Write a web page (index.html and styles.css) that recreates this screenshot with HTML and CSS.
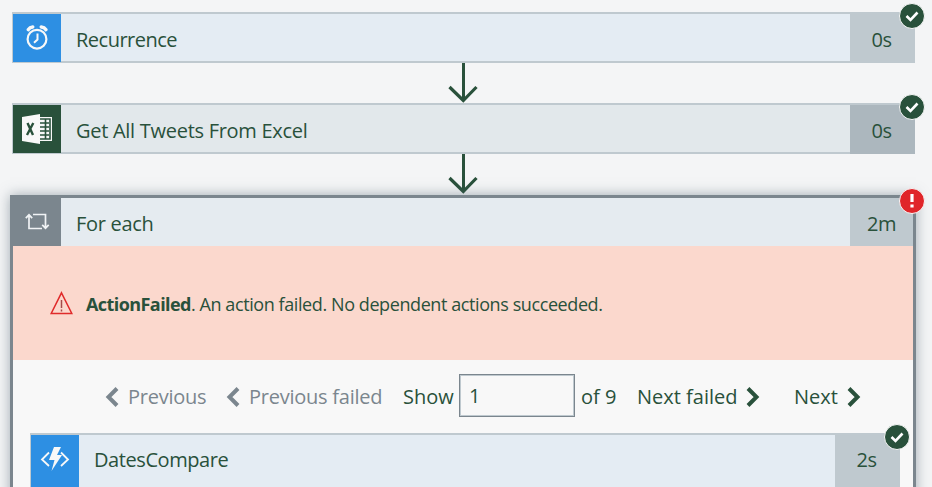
FILE: index.html
```html
<!DOCTYPE html>
<html lang="en">
<head>
<meta charset="utf-8">
<title>Run history</title>
<link rel="stylesheet" href="styles.css">
</head>
<body>
<main class="flow">
  <section class="card">
    <div class="icon blue"><svg width="24" height="28" viewBox="0 0 24 28" fill="none" stroke="#f8f8f8"><circle cx="12" cy="15.2" r="9.4" stroke-width="2.2"/><path d="M12.500 9.500v6L9 18.800" stroke-width="2"/><path d="M3.200 5.700Q4.800 3.300 7.800 3M16.200 3q3.200.3 4.800 2.700" stroke-width="3.400" stroke-linecap="round"/></svg></div>
    <div class="title"><span class="t-recurrence">Recurrence</span></div>
    <div class="time">0s</div>
    <div class="badge"><svg width="24" height="24" viewBox="0 0 24 24"><path d="m6.500 12 4 4 7-7.500"/></svg></div>
  </section>
  <div class="arrow"><svg width="32" height="40" viewBox="0 0 32 40"><path d="M16.500 0v37" stroke-width="3"/><path d="m2.500 24 13.800 13.500L29.500 24"/></svg></div>
  <section class="card excel-card">
    <div class="icon green"><svg width="32" height="32" viewBox="0 0 32 32"><path fill="#f8f8f8" d="M1 4 19 1v3h12v24H19v3L1 28z"/><path fill="none" stroke="#29513b" stroke-width="1.600" d="M19 6h10v20H19M19 10h9M19 14h9M19 18h9M19 22h9M24.500 6v20"/><path fill="none" stroke="#29513b" stroke-width="2.400" d="m6.500 10 5.500 12M12.300 10 6 22"/></svg></div>
    <div class="title"><span class="t-excel">Get All Tweets From Excel</span></div>
    <div class="time">0s</div>
    <div class="badge"><svg width="24" height="24" viewBox="0 0 24 24"><path d="m6.500 12 4 4 7-7.500"/></svg></div>
  </section>
  <div class="arrow"><svg width="32" height="40" viewBox="0 0 32 40"><path d="M16.500 0v37" stroke-width="3"/><path d="m2.500 24 13.800 13.500L29.500 24"/></svg></div>
  <section class="loop">
    <header class="loop-head">
      <div class="icon gray"><svg width="26" height="22" viewBox="0 0 26 22" fill="none" stroke="#f0f3f5" stroke-width="1.700"><path d="M5 5v12.500h13M9 3.500h12.500V17M1.800 7.200 5 3.800l3.200 3.400M18.200 13.800l3.300 3.400 3.200-3.400"/></svg></div>
      <div class="title"><span class="t-foreach">For each</span></div>
      <div class="time">2m</div>
    </header>
    <div class="badge failed"><svg width="24" height="24" viewBox="0 0 24 24"><path d="M12 5v8M12 15.500v3" stroke-width="3.200"/></svg></div>
    <div class="error">
      <svg width="24" height="24" viewBox="0 0 24 24" fill="none" stroke="#e02b2b" stroke-width="1.500"><path d="M12.500 1.800 22.800 22.500H2.200z"/><path d="M12.500 9v8M12.500 18.500v2" stroke="#a44c4b"/></svg>
      <p><b>ActionFailed</b><span>. An action failed. No dependent actions succeeded.</span></p>
    </div>
    <nav class="pager">
      <a class="prev muted"><svg width="14" height="20" viewBox="0 0 14 20"><path d="M12 1.500 3.500 10l8.500 8.500"/></svg><span>Previous</span></a>
      <a class="prev-failed muted"><svg width="14" height="20" viewBox="0 0 14 20"><path d="M12 1.500 3.500 10l8.500 8.500"/></svg><span>Previous failed</span></a>
      <label class="show">Show</label>
      <div class="page-input">1</div>
      <span class="count">of 9</span>
      <a class="next-failed"><span>Next failed</span><svg width="14" height="20" viewBox="0 0 14 20"><path d="M2 1.500 10.500 10 2 18.500"/></svg></a>
      <a class="next"><span>Next</span><svg width="14" height="20" viewBox="0 0 14 20"><path d="M2 1.500 10.500 10 2 18.500"/></svg></a>
    </nav>
    <section class="card inner">
      <div class="icon blue"><svg width="30" height="26" viewBox="0 0 30 26"><path d="M9 6.500 2 13.500l7 6.500M21 6.500l7 7-7 6.500" fill="none" stroke="#f8f8f8" stroke-width="1.800"/><path fill="#f8f8f8" d="M14 1h7l-4 8h5L11.500 25l3-11H9z"/></svg></div>
      <div class="title"><span class="t-dates">DatesCompare</span></div>
      <div class="time">2s</div>
      <div class="badge"><svg width="24" height="24" viewBox="0 0 24 24"><path d="m6.500 12 4 4 7-7.500"/></svg></div>
    </section>
  </section>
</main>
</body>
</html>
```
FILE: styles.css
```css
* { box-sizing: border-box; }
body {
  margin: 0;
  background: #f4f5f6;
  color: #29513b;
  font: 20px/28px "Open Sans", "Noto Sans", sans-serif;
}
.flow { height: 487px; overflow: hidden; padding: 12px 16px 0 10px; }
.card {
  position: relative;
  display: flex;
  height: 51px;
  margin: 0 1px 0 2px;
  border: solid #bfc9cf;
  border-width: 2px 0 2px 1px;
  background: #e4ecf3;
}
.excel-card { background: #e2e8eb; }
.icon {
  display: flex;
  flex: 0 0 48px;
  height: 48px;
  align-items: center;
  justify-content: center;
}
.icon svg { display: block; }
.blue { background: #2d8fe3; }
.green { background: #29513b; }
.gray { background: #7b868e; }
.title {
  display: flex;
  flex: 1;
  align-items: center;
  height: 52px;
  padding-left: 15px;
  white-space: nowrap;
}
.t-recurrence { letter-spacing: -.5px; }
.t-excel { letter-spacing: -.28px; }
.t-foreach { letter-spacing: -.3px; }
.t-dates { letter-spacing: -.42px; }
.time {
  display: flex;
  flex: 0 0 65px;
  align-items: center;
  justify-content: center;
  height: 49px;
  padding: 3px 2px 0 0;
  background: #bfc9cf;
  letter-spacing: -.6px;
}
.excel-card .time { background: #acb7be; }
.badge {
  position: absolute;
  top: -11.5px;
  right: -9.5px;
  width: 26px;
  height: 26px;
  border: 1px solid #f8f8f8;
  border-radius: 50%;
  background: #29513b;
}
.badge svg { display: block; fill: none; stroke: #fff; stroke-width: 2.6; }
.arrow { height: 40px; padding-left: 437px; }
.arrow svg { display: block; fill: none; stroke: #29513b; stroke-width: 3.2; }
.loop {
  position: relative;
  height: 320px;
  margin-top: 1px;
  border: 3px solid #7b868e;
  background: #f8f8f8;
  box-shadow: 0 0 12px rgba(75, 95, 110, .5);
}
.loop-head { display: flex; height: 48px; background: #e5ebf0; }
.loop-head .time { flex-basis: 63px; height: 48px; padding: 4px 0 0; }
.badge.failed { top: -10.5px; right: -11.5px; background: #e02529; }
.error {
  display: flex;
  align-items: center;
  height: 114px;
  padding-left: 36px;
  background: #fbd8cd;
}
.error p { margin: 1px 0 0 13px; font-size: 18px; letter-spacing: -.41px; white-space: nowrap; }
.error b { letter-spacing: -.57px; }
.pager { display: flex; align-items: center; height: 73px; padding-left: 92px; white-space: nowrap; }
.pager a { display: flex; align-items: center; }
.pager svg { fill: none; stroke: #29513b; stroke-width: 4; }
.muted { color: #7b868e; letter-spacing: -.24px; }
.pager .muted svg { stroke: #7b868e; margin-right: 9px; }
.prev { width: 121px; }
.prev-failed { width: 177px; }
.show { width: 56px; }
.page-input {
  width: 116px;
  height: 43px;
  margin-top: -3px;
  padding: 7px 0 0 9px;
  border: 1px solid #7b868e;
  box-shadow: inset 0 0 0 1px #bfc9cf;
}
.count { width: 62px; padding-left: 6px; }
.next-failed { width: 157px; justify-content: space-between; padding-right: 34px; }
.next { width: 67px; justify-content: space-between; }
.inner { margin: 0 13px 0 17px; height: 60px; }
.inner .title { height: 50px; }
.inner .icon, .inner .time { height: 58px; }
.inner .icon { padding-bottom: 10px; }
.inner .time { padding-bottom: 11px; }
```
